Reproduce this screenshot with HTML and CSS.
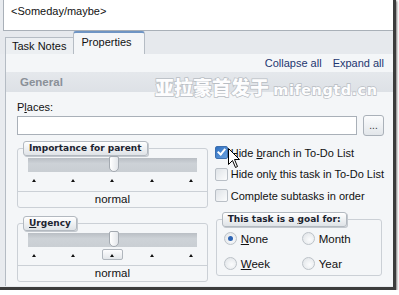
FILE: index.html
```html
<!DOCTYPE html>
<html lang="en">
<head>
    <meta charset="UTF-8">
    <title>Task Properties</title>
    <link rel="stylesheet" href="styles.css">
</head>
<body>

<div class="window">
    <!-- Task title -->
    <div class="title-box">&lt;Someday/maybe&gt;</div>

    <!-- Tabs -->
    <div class="tabs">
        <span class="tab">Task Notes</span>
        <span class="tab selected">Properties</span>
    </div>

    <div class="panel">
        <div class="links">
            <a>Collapse all</a>
            <a>Expand all</a>
        </div>

        <div class="section-head">
            General
            <span class="watermark">亚拉豪首发于 <span class="wm-latin">mifengtd.cn</span></span>
        </div>

        <div class="section-body">
            <label class="field-label">P<u>l</u>aces:</label>
            <div class="places-row">
                <input type="text" class="places-input">
                <button class="browse">...</button>
            </div>

            <div class="columns">
                <!-- Left column: sliders -->
                <div class="left-col">
                    <fieldset class="group">
                        <legend>Importance for parent</legend>
                        <div class="slider">
                            <div class="track"><span class="thumb"></span></div>
                            <div class="ticks">
                                <span class="tick"></span>
                                <span class="tick"></span>
                                <span class="tick"></span>
                                <span class="tick"></span>
                                <span class="tick"></span>
                            </div>
                        </div>
                        <div class="value">normal</div>
                    </fieldset>

                    <fieldset class="group urgency">
                        <legend><u>U</u>rgency</legend>
                        <div class="slider">
                            <div class="track"><span class="thumb"></span></div>
                            <div class="ticks">
                                <span class="tick"></span>
                                <span class="tick"></span>
                                <span class="tick hot"></span>
                                <span class="tick"></span>
                                <span class="tick"></span>
                            </div>
                        </div>
                        <div class="value">normal</div>
                    </fieldset>
                </div>

                <!-- Right column: options -->
                <div class="right-col">
                    <div class="check-row"><span class="box checked"></span><span>Hide <u>b</u>ranch in To-Do List</span></div>
                    <div class="check-row"><span class="box"></span><span>Hide onl<u>y</u> this task in To-Do List</span></div>
                    <div class="check-row"><span class="box"></span><span>Complete subtasks in order</span></div>

                    <fieldset class="group goal">
                        <legend>This task is a <u>g</u>oal for:</legend>
                        <div class="radios">
                            <div class="radio-row"><span class="radio on"></span><span><u>N</u>one</span></div>
                            <div class="radio-row"><span class="radio"></span><span>Month</span></div>
                            <div class="radio-row"><span class="radio"></span><span><u>W</u>eek</span></div>
                            <div class="radio-row"><span class="radio"></span><span>Year</span></div>
                        </div>
                    </fieldset>
                </div>
            </div>
        </div>

        <!-- mouse pointer over the first checkbox -->
        <svg class="cursor" width="13" height="21" viewBox="0 0 13 21">
            <path d="M0.5 0.5 L0.5 16.5 L4.5 12.5 L7.5 19.5 L9.5 18.5 L6.5 11.5 L11.5 11.5 Z" fill="#fff" stroke="#000" stroke-width="1"/>
        </svg>
    </div>
</div>

</body>
</html>
```

FILE: styles.css
```css
/* Global Styles */
body {
    margin: 0;
    padding: 0;
    background: #fff;
    font-family: "Liberation Sans", Arial, sans-serif;
    font-size: 11px;
    color: #111;
}
u {
    text-decoration: underline;
    text-underline-offset: 1px;
}
.window {
    width: 393px;
    height: 287px;
    border-right: 3px solid #3c3c3c;
    border-bottom: 3px solid #3c3c3c;
    box-shadow: 1px 1px 2px #777;
    background: #e8ebef;
    position: relative;
    overflow: hidden;
}
.title-box {
    height: 31px;
    margin-left: 3px;
    padding: 5px 0 0 7px;
    box-sizing: border-box;
    background: #fff;
    border-left: 1px solid #a9b0b8;
    border-bottom: 1px solid #a9b0b8;
    font-size: 11px;
}

/* Tabs */
.tabs {
    height: 23px;
    display: flex;
    align-items: flex-end;
    padding-left: 5px;
    background: #e6e9ed;
}
.tab {
    height: 16px;
    padding: 0 7px 0 6px;
    line-height: 16px;
    border: 1px solid #b5bcc4;
    border-bottom: none;
    background: #eceff2;
    font-size: 11px;
}
.tab.selected {
    height: 21px;
    line-height: 18px;
    padding: 0 12px 0 7px;
    border-top: 2px solid #6f95c4;
    border-radius: 3px 3px 0 0;
    background: #f4f6f8;
    margin-left: -1px;
}

/* Panel */
.panel {
    margin-left: 5px;
    height: 232px;
    background: #f4f6f8;
    border-left: 1px solid #b5bcc4;
    position: relative;
}
.links {
    height: 18px;
    display: flex;
    justify-content: flex-end;
    align-items: center;
    gap: 11px;
    padding-right: 9px;
}
.links a {
    color: #1e3670;
    font-size: 11px;
}
.section-head {
    height: 20px;
    line-height: 20px;
    padding-left: 14px;
    background: linear-gradient(#e5e8ec, #dde1e6);
    color: #8a9098;
    font-weight: bold;
    font-size: 11.5px;
    position: relative;
}
.watermark {
    position: absolute;
    left: 149px;
    top: 5px;
    line-height: 20px;
    font-family: "Noto Sans CJK SC", "DejaVu Sans", sans-serif;
    font-weight: 900;
    font-size: 19px;
    color: #fdfdfe;
    -webkit-text-stroke: 1.4px #b8bdc3;
    paint-order: stroke fill;
    white-space: nowrap;
}
.wm-latin {
    font-family: "DejaVu Sans", sans-serif;
    font-size: 14.5px;
    letter-spacing: 0.5px;
}
.section-body {
    padding: 9px 9px 0 11px;
}
.field-label {
    display: block;
    height: 13px;
    line-height: 13px;
    font-size: 11px;
}
.places-row {
    display: flex;
    align-items: center;
    gap: 6px;
    margin-top: 1px;
}
.places-input {
    width: 340px;
    height: 19px;
    box-sizing: border-box;
    border: 1px solid #a9b0b8;
    background: #fff;
    margin: 0;
}
.browse {
    width: 21px;
    height: 21px;
    padding: 0;
    border: 1px solid #aab1b9;
    border-radius: 3px;
    background: linear-gradient(#fbfcfd, #e2e6ea);
    color: #333;
    font-size: 10px;
    line-height: 14px;
}

/* Columns */
.columns {
    display: flex;
    gap: 5px;
    margin-top: 5px;
}
.left-col {
    width: 193px;
}
.right-col {
    flex: 1;
    padding-top: 1px;
}
.group {
    margin: 0;
    padding: 0;
    border: 1px solid #cbd0d6;
    border-radius: 3px;
}
.group legend {
    margin-left: 5px;
    padding: 0 5px;
    height: 13px;
    line-height: 13px;
    font-family: "DejaVu Sans", sans-serif;
    font-weight: bold;
    font-size: 9px;
    color: #1c2430;
    background: linear-gradient(#ffffff, #dfe3e7);
    border: 1px solid #b3b9c0;
    border-radius: 3px;
    box-shadow: 1px 1px 0 #c3c8ce;
}
.slider {
    padding: 2px 10px 0 10px;
    height: 33px;
    border-bottom: 1px solid #cbd0d6;
}
.track {
    height: 14px;
    background: linear-gradient(#b9bec4, #cdd2d7 40%, #c9ced3);
    position: relative;
}
.thumb {
    position: absolute;
    left: 81px;
    top: -2px;
    width: 8px;
    height: 14px;
    background: linear-gradient(90deg, #ffffff, #e3e6ea);
    border: 1px solid #a3a9b0;
    border-radius: 2px 2px 5px 5px;
}
.ticks {
    display: flex;
    justify-content: space-between;
    padding: 0 2px 0 3px;
    margin-top: 6px;
}
.tick {
    width: 7px;
    height: 6px;
    position: relative;
    z-index: 0;
}
.tick::before {
    content: "";
    position: absolute;
    left: 1px;
    top: 1px;
    border-left: 2.5px solid transparent;
    border-right: 2.5px solid transparent;
    border-bottom: 3px solid #111;
}
.tick.hot::after {
    content: "";
    position: absolute;
    left: -7px;
    top: -4px;
    width: 19px;
    height: 9px;
    border: 1px solid #b0b6bd;
    border-radius: 2px;
    background: linear-gradient(#fdfdfe, #e3e6ea);
    z-index: -1;
}
.value {
    height: 15px;
    line-height: 15px;
    text-align: center;
    font-size: 11.5px;
}
.urgency {
    margin-top: 8px;
}
.urgency .slider {
    height: 32px;
}

/* Checkboxes */
.check-row {
    display: flex;
    align-items: center;
    height: 21.5px;
    font-size: 11px;
    white-space: nowrap;
}
.box {
    flex: none;
    width: 11px;
    height: 11px;
    margin-left: 2px;
    margin-right: 3px;
    border: 1px solid #b9bfc6;
    border-radius: 2px;
    background: linear-gradient(135deg, #dfe3e7, #fbfcfd);
    position: relative;
}
.box.checked {
    background: linear-gradient(135deg, #2f6fc0, #6aa2e0);
    border-color: #3d6fae;
}
.box.checked::after {
    content: "";
    position: absolute;
    left: 3px;
    top: 0px;
    width: 3px;
    height: 6px;
    border-right: 2px solid #fff;
    border-bottom: 2px solid #fff;
    transform: rotate(40deg);
}

/* Goal group */
.goal {
    margin: 5px 2px 0 3px;
    height: 62px;
}
.radios {
    display: grid;
    grid-template-columns: 78px 1fr;
    row-gap: 11px;
    padding: 5px 0 0 7px;
}
.radio-row {
    display: flex;
    align-items: center;
    height: 14px;
    font-size: 11.5px;
}
.radio {
    flex: none;
    width: 11px;
    height: 11px;
    margin-right: 4px;
    border: 1px solid #bcc2c8;
    border-radius: 50%;
    background: radial-gradient(circle at 60% 60%, #fbfcfd, #dde1e5);
    position: relative;
}
.radio.on::after {
    content: "";
    position: absolute;
    left: 3px;
    top: 3px;
    width: 5px;
    height: 5px;
    border-radius: 50%;
    background: #2d64b4;
}

.cursor {
    position: absolute;
    left: 222px;
    top: 94px;
}
```
